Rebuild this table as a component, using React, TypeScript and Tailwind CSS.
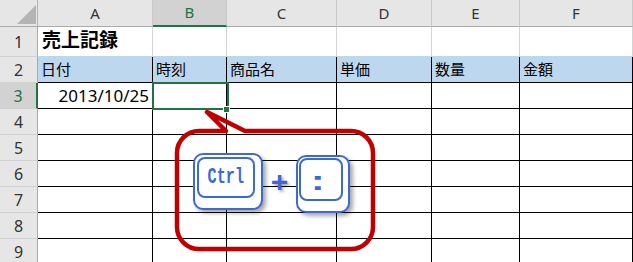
import React from 'react';

const cols = ['A', 'B', 'C', 'D', 'E', 'F'];
const heads = ['日付', '時刻', '商品名', '単価', '数量', '金額'];

const App = () => {
    const rows = [1, 2, 3, 4, 5, 6, 7, 8, 9];

    return (
        <div className="relative w-[633px] h-[262px] overflow-hidden bg-white font-['Noto_Sans','Noto_Sans_CJK_JP',sans-serif] text-black">
            <div className="grid grid-cols-[38px_115px_74px_110px_95px_88px_113px] grid-rows-[27px_30px_repeat(8,26px)]">
                {/* corner */}
                <div className="relative bg-[#e6e6e6] border-r border-b border-r-[#b4b4b4] border-b-[#ababab]">
                    <svg className="absolute left-[17px] top-[5px]" width="19" height="19" viewBox="0 0 19 19">
                        <polygon points="19,0 19,19 0,19" fill="#b4b4b4" />
                    </svg>
                </div>
                {cols.map((c) =>
                    c === 'B' ? (
                        <div key={c} className="flex items-center justify-center bg-[#d2d2d2] border-r border-r-[#c8c8c8] border-b-2 border-b-[#217346] text-[15px] text-[#217346]">
                            {c}
                        </div>
                    ) : (
                        <div key={c} className="flex items-center justify-center bg-[#e6e6e6] border-r border-r-[#c8c8c8] border-b border-b-[#ababab] text-[15px] text-[#333]">
                            {c}
                        </div>
                    )
                )}

                {rows.map((r) => (
                    <React.Fragment key={r}>
                        {r === 3 ? (
                            <div className="flex items-center justify-center bg-[#d2d2d2] border-r-2 border-r-[#217346] border-b border-b-[#d0d0d0] text-[16px] text-[#217346]">
                                {r}
                            </div>
                        ) : (
                            <div className="flex items-center justify-center bg-[#e6e6e6] border-r border-r-[#ababab] border-b border-b-[#d0d0d0] text-[16px] text-[#333]">
                                {r}
                            </div>
                        )}
                        {cols.map((c, i) => {
                            if (r === 1) {
                                return (
                                    <div key={c} className="flex items-center pl-[4px] pb-[3px] border-r border-b border-r-[#d4d4d4] border-b-[#bdd7ee] text-[19px] font-bold whitespace-nowrap">
                                        {i === 0 ? '売上記録' : ''}
                                    </div>
                                );
                            }
                            if (r === 2) {
                                return (
                                    <div key={c} className="flex items-center pl-[3px] bg-[#bdd7ee] border-r border-b border-black text-[15px] whitespace-nowrap">
                                        {heads[i]}
                                    </div>
                                );
                            }
                            return (
                                <div key={c} className="flex items-center justify-end pr-[3px] border-r border-b border-black text-[17px]">
                                    {r === 3 && i === 0 ? '2013/10/25' : ''}
                                </div>
                            );
                        })}
                    </React.Fragment>
                ))}
            </div>

            {/* active cell B3 */}
            <div className="absolute left-[152px] top-[82px] w-[77px] h-[28px] border-2 border-[#217346]" />
            <div className="absolute left-[223px] top-[106px] w-[7px] h-[7px] bg-[#217346] border border-white" />

            {/* callout */}
            <svg className="absolute left-0 top-0 pointer-events-none" width="633" height="262" viewBox="0 0 633 262">
                <path
                    d="M 199 131 L 226 131 L 207 112 L 245 131 L 351 131 A 22 22 0 0 1 373 153 L 373 227 A 22 22 0 0 1 351 249 L 199 249 A 22 22 0 0 1 177 227 L 177 153 A 22 22 0 0 1 199 131 Z"
                    fill="none"
                    stroke="#c00000"
                    strokeWidth="4.5"
                    strokeLinejoin="round"
                />
            </svg>

            {/* keys */}
            <div className="absolute left-[193px] top-[153px] flex items-start">
                <div className="w-[70px] h-[57px] pl-[2px] pt-[2px] rounded-[10px] border-2 border-[#3b6ad2] bg-white shadow-[3px_3px_4px_rgba(0,0,0,0.35)]">
                    <div className="w-[58px] h-[41px] flex items-center justify-center rounded-[8px] border-2 border-[#3b6ad2] bg-white">
                        <span className="font-['Liberation_Mono',monospace] font-bold text-[19px] text-[#3b6ad2] leading-none scale-x-[0.8] scale-y-[1.2]">
                            Ctrl
                        </span>
                    </div>
                </div>
                <div className="w-[33px] h-[57px] flex items-center justify-center font-['Liberation_Sans',sans-serif] font-bold text-[30px] text-[#3b6ad2] [text-shadow:2px_2px_3px_rgba(0,0,0,0.35)]">
                    +
                </div>
                <div className="mt-[2px] w-[54px] h-[58px] pl-[1px] pt-[1px] rounded-[10px] border-2 border-[#3b6ad2] bg-white shadow-[3px_3px_4px_rgba(0,0,0,0.35)]">
                    <div className="w-[44px] h-[43px] flex items-center justify-center pr-[6px] pt-[2px] rounded-[8px] border-2 border-[#3b6ad2] bg-white">
                        <span className="font-['Liberation_Sans',sans-serif] font-bold text-[28px] text-[#3b6ad2] leading-none scale-x-[1.5]">
                            :
                        </span>
                    </div>
                </div>
            </div>
        </div>
    );
};

export default App;
